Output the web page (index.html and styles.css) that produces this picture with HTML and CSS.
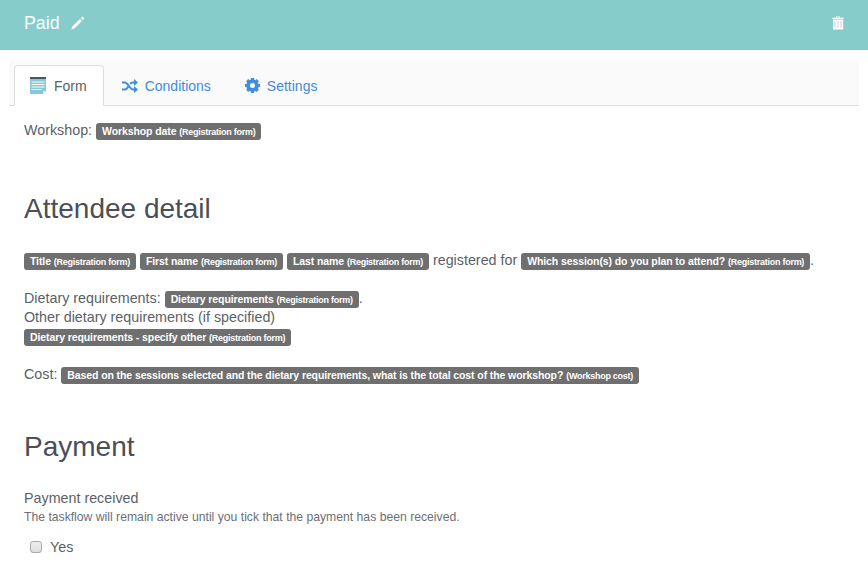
FILE: index.html
```html
<!DOCTYPE html>
<html lang="en">
<head>
<meta charset="utf-8">
<title>Paid</title>
<link rel="stylesheet" href="styles.css">
</head>
<body>
<header class="topbar">
  <div class="topbar-title">
    <span>Paid</span>
    <svg class="pencil" width="14" height="14" viewBox="0 0 14 14"><path fill="#fff" d="M11.400 0.600l2 2-1.500 1.500-2-2zM9 3l2 2-7.600 7.600-3 0.800 0.800-3z"/></svg>
  </div>
  <svg class="trash" width="12" height="14" viewBox="0 0 12 14"><path fill="#fff" d="M4 0.500h4v1.200h3.800v1.200H0.200V1.700H4zM5 1v.7h2V1z"/><path fill="#fff" d="M1 3.600h10V13.500H1z"/><path fill="#d5cdf0" d="M2.400 5h1.100v7H2.400zM5.400 5h1.100v7H5.400zM8.400 5h1.100v7H8.400z"/><path fill="#c8d0d0" d="M11 3.600h.6v9.900H11z"/></svg>
</header>
<main class="content">
  <nav class="tabs">
    <a class="tab active">
      <svg width="16" height="18" viewBox="0 0 16 18"><path fill="#85c8d8" d="M0 2h16v12l-3 3H0z"/><path fill="#4a5560" d="M0 0h16v2H0z"/><path fill="#fff" d="M1.500 4.500h13v1h-13zM1.500 7h13v1h-13zM1.500 9.500h13v1h-13zM1.500 12h10v1h-10z"/><path fill="#d8eef2" d="M13 17v-3h3z"/></svg>
      Form
    </a>
    <a class="tab">
      <svg width="16" height="14" viewBox="0 0 16 14"><path fill="none" stroke="#3f8fdc" stroke-width="2" d="M0 3.500h3c3 0 4.500 7 8 7h2M0 10.500h3c1.500 0 2.500-1.500 3.300-3M8 5c.8-1 1.700-1.500 3-1.500h2"/><path fill="#3f8fdc" d="M12 0l4 3.500-4 3.500zM12 7l4 3.500-4 3.500z"/></svg>
      Conditions
    </a>
    <a class="tab">
      <svg width="15" height="15" viewBox="0 0 24 24"><circle cx="12" cy="12" r="7" fill="none" stroke="#3f8fdc" stroke-width="6"/><g stroke="#3f8fdc" stroke-width="5"><path d="M12 0v5M12 19v5M0 12h5M19 12h5M3.500 3.500l3.500 3.500M17 17l3.500 3.500M3.500 20.500l3.500-3.500M17 7l3.500-3.500"/></g></svg>
      Settings
    </a>
  </nav>
  <p class="line workshop">Workshop: <span class="tag"><b>Workshop date</b> <small>(Registration form)</small></span></p>
  <h2 class="attendee">Attendee detail</h2>
  <p class="line registered"><span class="tag"><b>Title</b> <small>(Registration form)</small></span> <span class="tag"><b>First name</b> <small>(Registration form)</small></span> <span class="tag"><b>Last name</b> <small>(Registration form)</small></span> registered for <span class="tag"><b>Which session(s) do you plan to attend?</b> <small>(Registration form)</small></span>.</p>
  <p class="line dietary">Dietary requirements: <span class="tag"><b>Dietary requirements</b> <small>(Registration form)</small></span>.<br>Other dietary requirements (if specified)<br><span class="tag tag-own-line"><b>Dietary requirements - specify other</b> <small>(Registration form)</small></span></p>
  <p class="line cost">Cost: <span class="tag"><b>Based on the sessions selected and the dietary requirements, what is the total cost of the workshop?</b> <small>(Workshop cost)</small></span></p>
  <h2 class="payment">Payment</h2>
  <div class="field-label">Payment received</div>
  <div class="help">The taskflow will remain active until you tick that the payment has been received.</div>
  <label class="check"><span class="box"></span>Yes</label>
</main>
</body>
</html>
```
FILE: styles.css
```css
* { box-sizing: border-box; }
html, body { margin: 0; padding: 0; background: #fff; }
body {
  width: 868px;
  height: 586px;
  overflow: hidden;
  font-family: "Liberation Sans", Arial, sans-serif;
  font-size: 14.300px;
  line-height: 18px;
  color: #5a5f67;
}
.topbar {
  height: 50px;
  background: #86cccb;
  display: flex;
  align-items: center;
  justify-content: space-between;
  padding: 0 24px 4px;
  color: #fff;
}
.topbar-title { display: flex; align-items: center; gap: 11px; font-size: 17.800px; }
.content { padding: 10px 0 0; }
.tabs {
  margin-left: 9px;
  width: 850px;
  height: 46px;
  background: #fafafa;
  border-bottom: 1px solid #ddd;
  display: flex;
  padding: 5px 0 0 5px;
  font-size: 14px;
}
.tab {
  height: 41px;
  padding: 0 15px;
  margin-right: 2px;
  display: flex;
  align-items: center;
  gap: 7px;
  color: #428bdc;
  border: 1px solid transparent;
}
.tab.active {
  background: #fff;
  color: #5a5f67;
  border-color: #ddd #ddd #fff;
  border-radius: 4px 4px 0 0;
  gap: 8px;
  padding-right: 16px;
}
.line { margin: 0 0 0 24px; }
.workshop { margin-top: 15px; }
.tag {
  display: inline-block;
  background: #6f6f6f;
  color: #fff;
  border-radius: 3px;
  padding: 0 6px;
  font-size: 10.500px;
  line-height: 17px;
  height: 17px;
}
.tag-own-line { vertical-align: -1px; }
.tag b { font-weight: 700; letter-spacing: -0.1px; }
.tag small { font-size: 9px; font-weight: 700; letter-spacing: -0.26px; }
h2 { margin: 0 0 0 24px; font-weight: 400; font-size: 28px; line-height: 34px; color: #4a4f57; }
.attendee { margin-top: 52px; }
.registered { margin-top: 25px; }
.dietary { margin-top: 19px; }
.cost { margin-top: 19px; }
.payment { margin-top: 46px; }
.field-label { margin: 25px 0 0 24px; }
.help { margin: 2px 0 0 24px; font-size: 12.200px; line-height: 16px; color: #6a6f76; }
.check { display: flex; align-items: center; margin: 13px 0 0 30px; gap: 8px; }
.box {
  width: 12px; height: 12px;
  border: 1px solid #aaa;
  border-radius: 3px;
  background: linear-gradient(#eee, #ddd);
}
```
